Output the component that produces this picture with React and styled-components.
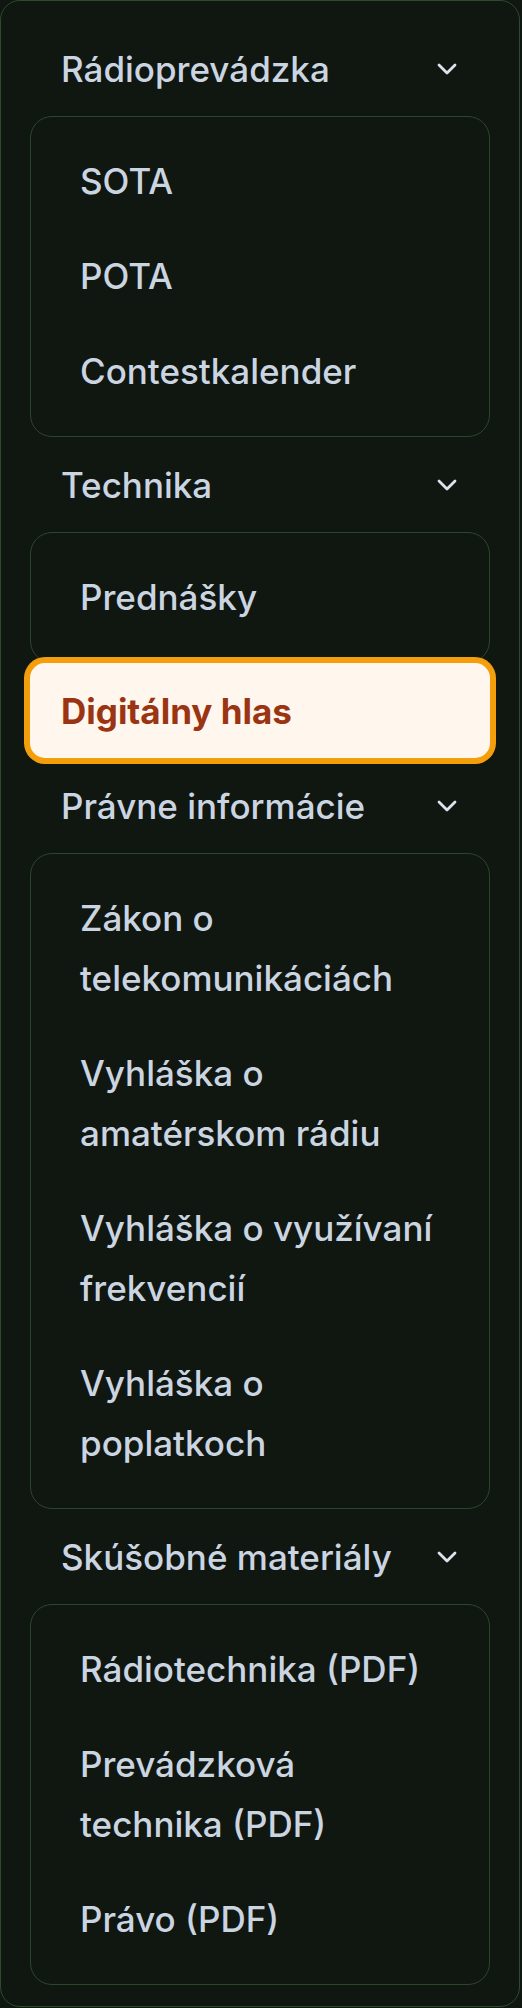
import React from "react";
import styled, { createGlobalStyle, css } from "styled-components";
import { ChevronDown } from "lucide-react";

const sections = [
  {
    title: "Rádioprevádzka",
    links: ["SOTA", "POTA", "Contestkalender"],
  },
  {
    title: "Technika",
    links: ["Prednášky"],
  },
  { link: "Digitálny hlas", active: true },
  {
    title: "Právne informácie",
    links: [
      "Zákon o telekomunikáciách",
      "Vyhláška o amatérskom rádiu",
      "Vyhláška o využívaní frekvencií",
      "Vyhláška o poplatkoch",
    ],
  },
  {
    title: "Skúšobné materiály",
    links: ["Rádiotechnika (PDF)", "Prevádzková technika (PDF)", "Právo (PDF)"],
  },
];

function App() {
  return (
    <>
      <GlobalStyle />
      <Panel>
        {sections.map((section) =>
          section.link ? (
            <TopLink key={section.link} href="#" $active={section.active}>
              {section.link}
            </TopLink>
          ) : (
            <Section key={section.title}>
              <SectionHeading type="button">
                <HeadingLabel>{section.title}</HeadingLabel>
                <ChevronDown size={32} strokeWidth={2.1} />
              </SectionHeading>
              <SubList>
                {section.links.map((l) => (
                  <SubLink key={l} href="#">
                    {l}
                  </SubLink>
                ))}
              </SubList>
            </Section>
          )
        )}
      </Panel>
    </>
  );
}

export default App;

const GlobalStyle = createGlobalStyle`
  * {
    box-sizing: border-box;
  }
  body {
    margin: 0;
    background: #101710;
    font-family: Inter, "Noto Sans", sans-serif;
  }
`;

const Panel = styled.nav`
  width: 520px;
  border: 1px solid #2e4a2e;
  border-radius: 20px;
  background: #101710;
  padding: 20px 29px 21px;
  display: flex;
  flex-direction: column;
`;

const Section = styled.div`
  display: flex;
  flex-direction: column;
`;

const rowText = css`
  font-family: Inter, "Noto Sans", sans-serif;
  font-size: 35px;
  line-height: 60px;
  font-weight: 500;
  color: #cbd5e1;
`;

const SectionHeading = styled.button`
  ${rowText}
  display: flex;
  align-items: center;
  justify-content: space-between;
  width: 100%;
  background: none;
  border: 0;
  padding: 17.5px 27px 17.5px 31px;
  text-align: left;
  cursor: pointer;
  svg {
    flex-shrink: 0;
    color: #dbe3ee;
  }
`;

const HeadingLabel = styled.span``;

const SubList = styled.div`
  display: flex;
  flex-direction: column;
  border: 1px solid #2c462c;
  border-radius: 22px;
  padding: 16px 17px 18px;
`;

const SubLink = styled.a`
  ${rowText}
  display: block;
  text-decoration: none;
  padding: 17.5px 34px 17.5px 32px;
`;

const TopLink = styled.a`
  ${rowText}
  display: block;
  text-decoration: none;
  padding: 17.5px 31px;
  border-radius: 15px;
  ${(p) =>
    p.$active &&
    css`
      position: relative;
      z-index: 1;
      background: #fff7ed;
      color: #9a3412;
      font-weight: 700;
      box-shadow: 0 0 0 6px #f59e0b;
    `}
`;
